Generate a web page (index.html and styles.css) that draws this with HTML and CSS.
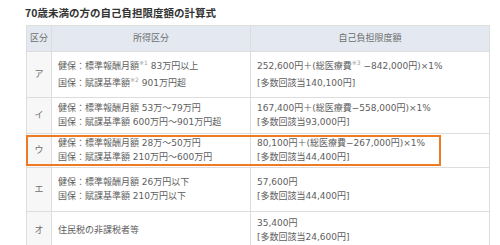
FILE: index.html
```html
<!DOCTYPE html>
<html lang="ja">
<head>
<meta charset="utf-8">
<link rel="stylesheet" href="styles.css">
</head>
<body>
<div class="page">
  <h2 class="title">70歳未満の方の自己負担限度額の計算式</h2>
  <div class="table-wrap">
    <table class="calc">
      <thead>
        <tr class="row-head">
          <th class="c1">区分</th>
          <th class="c2">所得区分</th>
          <th class="c3">自己負担限度額</th>
        </tr>
      </thead>
      <tbody>
        <tr class="row-a">
          <td class="c1">ア</td>
          <td class="c2">健保：標準報酬月額<sup>※1</sup> 83万円以上<br>国保：賦課基準額<sup>※2</sup> 901万円超</td>
          <td class="c3">252,600円＋(総医療費<sup>※3</sup> −842,000円)×1%<br>[多数回該当140,100円]</td>
        </tr>
        <tr class="row-b">
          <td class="c1">イ</td>
          <td class="c2">健保：標準報酬月額 53万～79万円<br>国保：賦課基準額 600万円～901万円超</td>
          <td class="c3">167,400円＋(総医療費−558,000円)×1%<br>[多数回該当93,000円]</td>
        </tr>
        <tr class="row-c">
          <td class="c1">ウ</td>
          <td class="c2">健保：標準報酬月額 28万～50万円<br>国保：賦課基準額 210万円～600万円</td>
          <td class="c3">80,100円＋(総医療費−267,000円)×1%<br>[多数回該当44,400円]</td>
        </tr>
        <tr class="row-d">
          <td class="c1">エ</td>
          <td class="c2">健保：標準報酬月額 26万円以下<br>国保：賦課基準額 210万円以下</td>
          <td class="c3">57,600円<br>[多数回該当44,400円]</td>
        </tr>
        <tr class="row-e">
          <td class="c1">オ</td>
          <td class="c2">住民税の非課税者等</td>
          <td class="c3">35,400円<br>[多数回該当24,600円]</td>
        </tr>
      </tbody>
    </table>
    <div class="highlight"></div>
  </div>
</div>
</body>
</html>
```

FILE: styles.css
```css
html, body {
  margin: 0;
  padding: 0;
  background: #ffffff;
}

.page {
  padding: 5px 10px 0 26px;
  font-family: "Noto Sans CJK JP", "Noto Sans", sans-serif;
  color: #5e5e5e;
}

.title {
  margin: 0 0 5px -1px;
  font-size: 10.5px;
  line-height: 15px;
  font-weight: bold;
  color: #333333;
}

.table-wrap {
  position: relative;
  width: 464px;
}

.calc {
  width: 464px;
  border-collapse: collapse;
  table-layout: fixed;
  font-family: "DejaVu Sans", "Noto Sans CJK JP", sans-serif;
  font-size: 9px;
  line-height: 13.5px;
}

.calc th,
.calc td {
  border: 1px solid #dddddd;
  padding: 0 6px;
  vertical-align: middle;
  text-align: left;
}

.calc th {
  background: #e4e9f1;
  font-weight: normal;
  text-align: center;
  color: #6e6e6e;
}

.calc .c1 {
  width: 24px;
  text-align: center;
  background: #f7f7f7;
  color: #6e6e6e;
  padding: 0;
}

.calc th.c1 {
  background: #e4e9f1;
}

.calc .c2 {
  width: 186px;
}

.calc sup {
  font-size: 6px;
  line-height: 0;
  vertical-align: 4px;
  color: #a0a0a0;
}

.row-head { height: 26px; }
.row-a { height: 46px; }
.row-a td { line-height: 17px; }
.row-b { height: 36px; }
.row-c { height: 34px; }
.row-d { height: 44px; }
.row-e { height: 38px; }

.highlight {
  position: absolute;
  left: 0;
  top: 110px;
  width: 411px;
  height: 27px;
  border: 2.5px solid #ee7a24;
  pointer-events: none;
}
```
